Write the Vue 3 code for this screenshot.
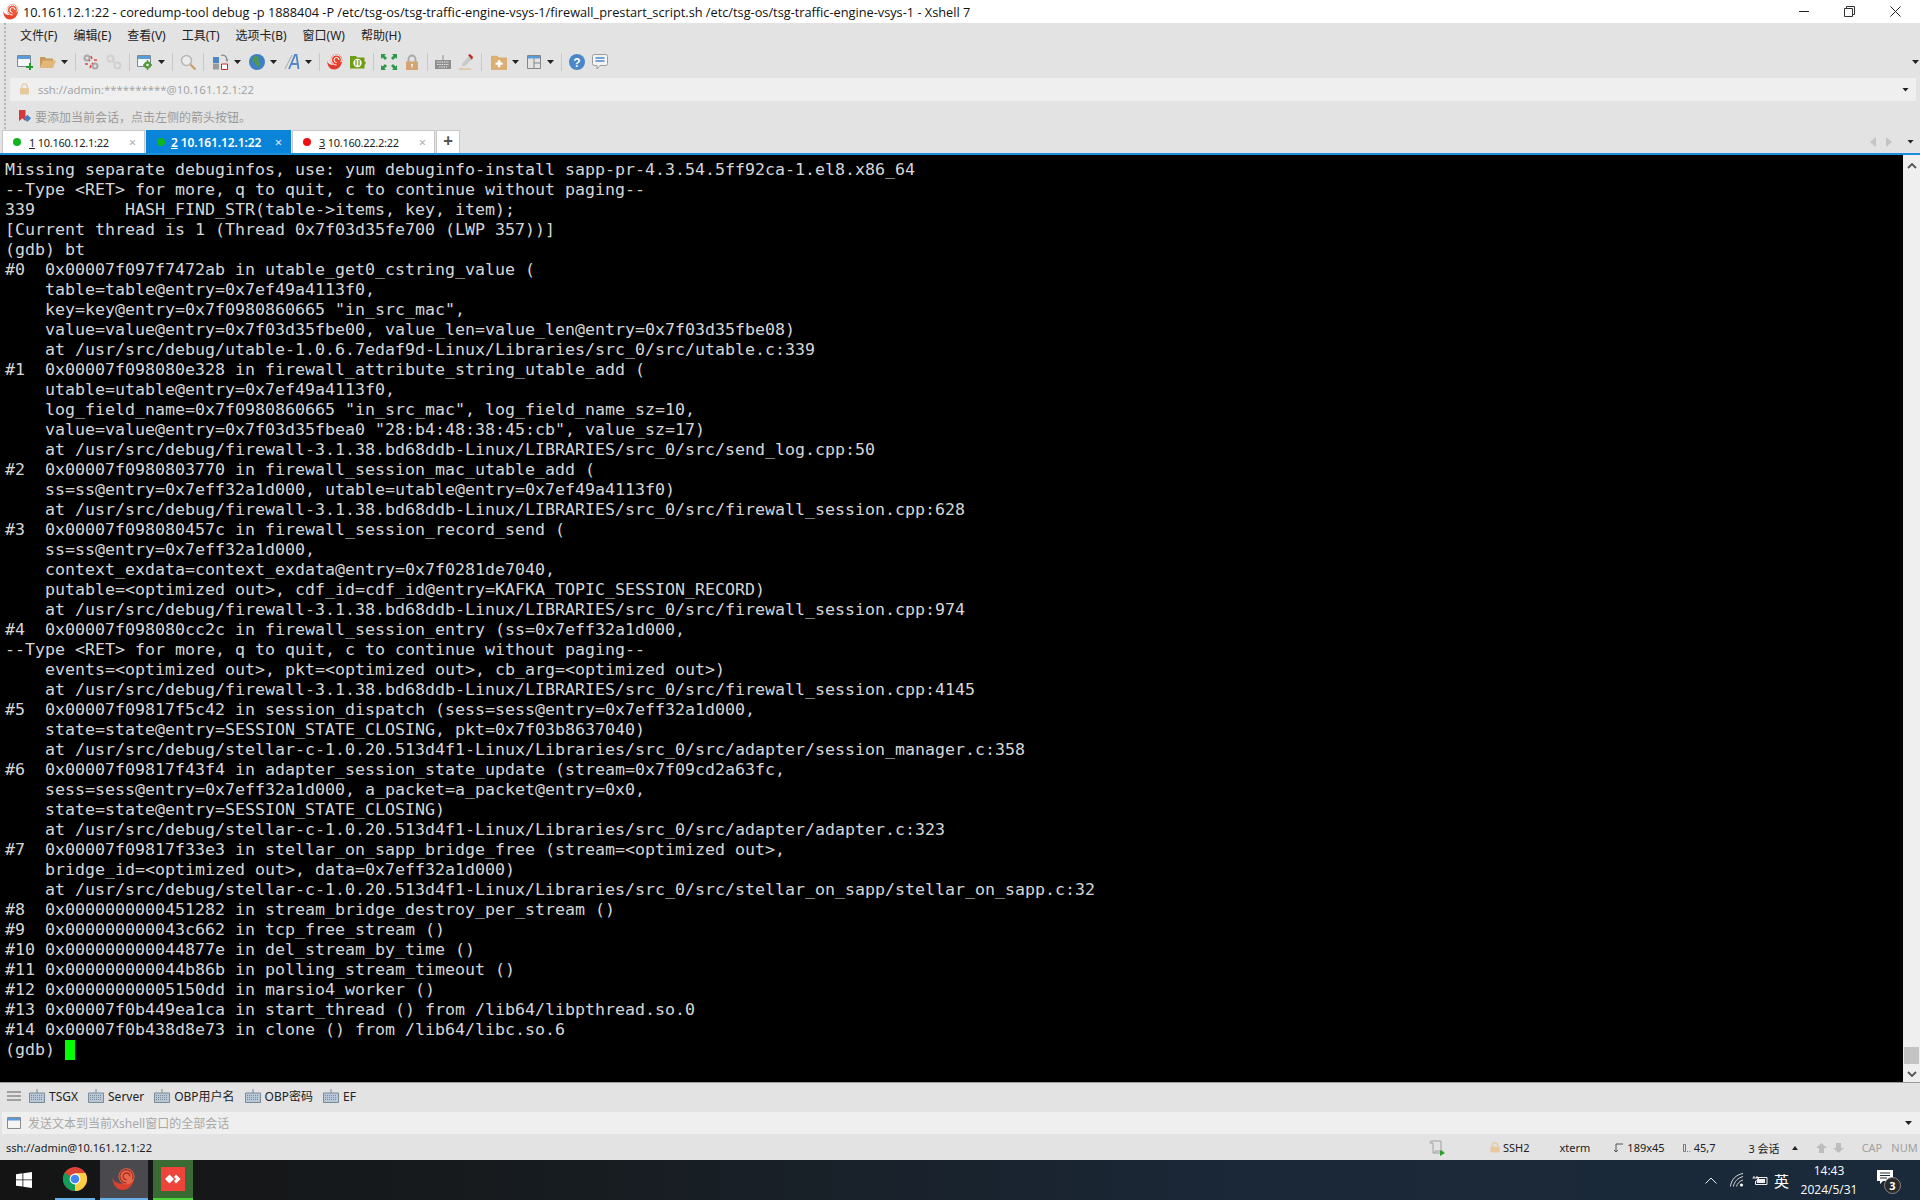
<script setup>
const lines = [
'Missing separate debuginfos, use: yum debuginfo-install sapp-pr-4.3.54.5ff92ca-1.el8.x86_64',
'--Type <RET> for more, q to quit, c to continue without paging--',
'339         HASH_FIND_STR(table->items, key, item);',
'[Current thread is 1 (Thread 0x7f03d35fe700 (LWP 357))]',
'(gdb) bt',
'#0  0x00007f097f7472ab in utable_get0_cstring_value (',
'    table=table@entry=0x7ef49a4113f0,',
'    key=key@entry=0x7f0980860665 "in_src_mac",',
'    value=value@entry=0x7f03d35fbe00, value_len=value_len@entry=0x7f03d35fbe08)',
'    at /usr/src/debug/utable-1.0.6.7edaf9d-Linux/Libraries/src_0/src/utable.c:339',
'#1  0x00007f098080e328 in firewall_attribute_string_utable_add (',
'    utable=utable@entry=0x7ef49a4113f0,',
'    log_field_name=0x7f0980860665 "in_src_mac", log_field_name_sz=10,',
'    value=value@entry=0x7f03d35fbea0 "28:b4:48:38:45:cb", value_sz=17)',
'    at /usr/src/debug/firewall-3.1.38.bd68ddb-Linux/LIBRARIES/src_0/src/send_log.cpp:50',
'#2  0x00007f0980803770 in firewall_session_mac_utable_add (',
'    ss=ss@entry=0x7eff32a1d000, utable=utable@entry=0x7ef49a4113f0)',
'    at /usr/src/debug/firewall-3.1.38.bd68ddb-Linux/LIBRARIES/src_0/src/firewall_session.cpp:628',
'#3  0x00007f098080457c in firewall_session_record_send (',
'    ss=ss@entry=0x7eff32a1d000,',
'    context_exdata=context_exdata@entry=0x7f0281de7040,',
'    putable=<optimized out>, cdf_id=cdf_id@entry=KAFKA_TOPIC_SESSION_RECORD)',
'    at /usr/src/debug/firewall-3.1.38.bd68ddb-Linux/LIBRARIES/src_0/src/firewall_session.cpp:974',
'#4  0x00007f098080cc2c in firewall_session_entry (ss=0x7eff32a1d000,',
'--Type <RET> for more, q to quit, c to continue without paging--',
'    events=<optimized out>, pkt=<optimized out>, cb_arg=<optimized out>)',
'    at /usr/src/debug/firewall-3.1.38.bd68ddb-Linux/LIBRARIES/src_0/src/firewall_session.cpp:4145',
'#5  0x00007f09817f5c42 in session_dispatch (sess=sess@entry=0x7eff32a1d000,',
'    state=state@entry=SESSION_STATE_CLOSING, pkt=0x7f03b8637040)',
'    at /usr/src/debug/stellar-c-1.0.20.513d4f1-Linux/Libraries/src_0/src/adapter/session_manager.c:358',
'#6  0x00007f09817f43f4 in adapter_session_state_update (stream=0x7f09cd2a63fc,',
'    sess=sess@entry=0x7eff32a1d000, a_packet=a_packet@entry=0x0,',
'    state=state@entry=SESSION_STATE_CLOSING)',
'    at /usr/src/debug/stellar-c-1.0.20.513d4f1-Linux/Libraries/src_0/src/adapter/adapter.c:323',
'#7  0x00007f09817f33e3 in stellar_on_sapp_bridge_free (stream=<optimized out>,',
'    bridge_id=<optimized out>, data=0x7eff32a1d000)',
'    at /usr/src/debug/stellar-c-1.0.20.513d4f1-Linux/Libraries/src_0/src/stellar_on_sapp/stellar_on_sapp.c:32',
'#8  0x0000000000451282 in stream_bridge_destroy_per_stream ()',
'#9  0x000000000043c662 in tcp_free_stream ()',
'#10 0x000000000044877e in del_stream_by_time ()',
'#11 0x000000000044b86b in polling_stream_timeout ()',
'#12 0x00000000005150dd in marsio4_worker ()',
'#13 0x00007f0b449ea1ca in start_thread () from /lib64/libpthread.so.0',
'#14 0x00007f0b438d8e73 in clone () from /lib64/libc.so.6',
]
const menus = ['文件(F)', '编辑(E)', '查看(V)', '工具(T)', '选项卡(B)', '窗口(W)', '帮助(H)']
const tabs = [
  { n: '1', host: '10.160.12.1:22', dot: '#0fb41e', active: false },
  { n: '2', host: '10.161.12.1:22', dot: '#0fb41e', active: true },
  { n: '3', host: '10.160.22.2:22', dot: '#f01010', active: false },
]
const quick = ['TSGX', 'Server', 'OBP用户名', 'OBP密码', 'EF']
</script>

<template>
  <div class="screen">
    <header class="title">
      <svg class="swirl16" viewBox="0 0 16 16">
        <path d="M0 7c1 3 4 4.500 7 4 2 0 3.500-.5 5-1.500l3-3c0 5-3.500 9-8 9C3 15.500.5 12 0 7z" fill="#e8432f"/>
        <circle cx="9.500" cy="6" r="5.800" fill="#ee5a3c"/>
        <path d="M9.500 8.500a2.500 2.500 0 112.500-2.500M9.500 11a5 5 0 114.500-3" fill="none" stroke="#fff" stroke-width="1"/>
      </svg>
      <span class="title-text">10.161.12.1:22 - coredump-tool debug -p 1888404 -P /etc/tsg-os/tsg-traffic-engine-vsys-1/firewall_prestart_script.sh /etc/tsg-os/tsg-traffic-engine-vsys-1 - Xshell 7</span>
      <div class="win-btns">
        <svg width="10" height="2" viewBox="0 0 10 2"><path d="M0 .5h10" stroke="#222"/></svg>
        <svg width="11" height="11" viewBox="0 0 11 11" fill="none" stroke="#333"><path d="M.5 2.500h8v8h-8zM2.500 2.500v-2h8v8h-2"/></svg>
        <svg width="11" height="11" viewBox="0 0 11 11" stroke="#222"><path d="M.5.5l10 10M10.500.5l-10 10"/></svg>
      </div>
    </header>

    <section class="chrome">
      <div class="grip"></div>
      <nav class="menu"><span v-for="m in menus" :key="m">{{ m }}</span></nav>

      <div class="toolbar">
        <svg class="ic" viewBox="0 0 16 16"><path d="M.5 1.500h13v11H.5z" fill="#f4f7fa" stroke="#7d8a96"/><path d="M1 2h12v3H1z" fill="#5a9bd8"/><path d="M9 12h3V9h2v3h2v2h-2v2h-2v-2H9z" fill="#1e9e2d"/></svg>
        <svg class="ic" viewBox="0 0 16 16"><path d="M0 3h5l1 1.500h7V7H3L0 14z" fill="#c89a5a"/><path d="M3 6.500h13L13 14H0z" fill="#e3b77a"/></svg>
        <i class="arrow"></i>
        <i class="sep"></i>
        <svg class="ic" viewBox="0 0 16 16" fill="none"><circle cx="4" cy="4" r="2.500" stroke="#a9a9a9" stroke-width="2"/><circle cx="12" cy="12" r="2.500" stroke="#a9a9a9" stroke-width="2"/><path d="M8 2l1 3M14 6l-3 0M2 10l3 0M7 14l1-3" stroke="#e04848" stroke-width="1.500"/><path d="M6 6l1 1M9 9l1 1" stroke="#c44" stroke-width="1.500"/></svg>
        <svg class="ic" viewBox="0 0 16 16" fill="none" stroke="#d2d2d2" stroke-width="2.200"><circle cx="4.500" cy="4.500" r="3"/><circle cx="11.500" cy="11.500" r="3"/><path d="M6.500 6.500l3 3"/></svg>
        <i class="sep"></i>
        <svg class="ic" viewBox="0 0 16 16"><path d="M.5 1.500h13v11H.5z" fill="#f4f7fa" stroke="#7d8a96"/><path d="M1 2h12v3H1z" fill="#5a9bd8"/><circle cx="10.500" cy="11" r="3.500" fill="#4d9b33"/><circle cx="10.500" cy="11" r="1.300" fill="#e8f2e4"/><path d="M10.500 6v2M10.500 14v2M6 11h1.500M13.500 11H15" stroke="#4d9b33" stroke-width="1.500"/></svg>
        <i class="arrow"></i>
        <i class="sep"></i>
        <svg class="ic" viewBox="0 0 16 16" fill="none"><circle cx="6.500" cy="6.500" r="5" stroke="#b7b7b7" stroke-width="1.600" fill="#ececec"/><path d="M10.500 10.500l5 5" stroke="#c99e66" stroke-width="2.200"/></svg>
        <i class="sep"></i>
        <svg class="ic ml2" viewBox="0 0 16 16"><path d="M0 3h6v6H0z" fill="#4d86c4"/><path d="M0 9.500h6v6H0z" fill="#9a9a9a"/><path d="M8.500 10h6v5.500h-6z" fill="#fff" stroke="#c62828"/><path d="M8 1.500c3-1 6 .8 6 4.500" fill="none" stroke="#8a8a8a" stroke-width="1.200"/><path d="M12.500 5.500h3L14 8z" fill="#8a8a8a"/></svg>
        <i class="arrow"></i>
        <svg class="ic ml1" viewBox="0 0 16 16"><circle cx="8" cy="8" r="8" fill="#3f7fc6"/><path d="M6 1.500l4 2-1 3 2 3-2 5-1.500-3.500L5 8 3 6.500z" fill="#4d9b4a"/></svg>
        <i class="arrow"></i>
        <svg class="ic" viewBox="0 0 16 16" fill="none"><path d="M1 15L8 1" stroke="#a9a9a9"/><path d="M5 15L11 1h1.500l2 14M7.500 10h6" stroke="#4f87c8" stroke-width="1.800"/></svg>
        <i class="arrow"></i>
        <i class="sep"></i>
        <svg class="ic" viewBox="0 0 16 16">
          <path d="M0 7c1 3 4 4.500 7 4 2 0 3.500-.5 5-1.500l3-3c0 5-3.500 9-8 9C3 15.500.5 12 0 7z" fill="#e23a30"/>
          <circle cx="9.500" cy="6" r="5.800" fill="#e8432f"/>
          <path d="M9.500 8.500a2.500 2.500 0 112.500-2.500M9.500 11a5 5 0 114.500-3" fill="none" stroke="#fff" stroke-width="1"/>
        </svg>
        <svg class="ic" viewBox="0 0 16 16"><path d="M0 2h6l1 1.500h7.500V7L16 9l-1.500 2v3.500H0z" fill="#6f9d14"/><circle cx="7.500" cy="9" r="4.200" fill="#fff"/><path d="M6 6v5.500M9 6v5.500" stroke="#6f9d14" stroke-width="1.300"/></svg>
        <i class="sep"></i>
        <svg class="ic" viewBox="0 0 16 16"><path d="M0 0h5L3.500 1.500 6 4 4 6 1.500 3.500 0 5zM16 0v5l-1.500-1.500L12 6l-2-2 2.500-2.500L11 0zM0 16v-5l1.500 1.500L4 10l2 2-2.500 2.500L5 16zM16 16h-5l1.500-1.500L10 12l2-2 2.500 2.500L16 11z" fill="#2d9a4a"/></svg>
        <svg class="ic" viewBox="0 0 16 16"><path d="M4.500 8V5a3.500 3.500 0 017 0v3" fill="none" stroke="#a9a9a9" stroke-width="1.800"/><path d="M2 7.500h12V16H2z" fill="#d4a574"/><circle cx="8" cy="11" r="1.200" fill="#f4e7d6"/><path d="M8 11v3" stroke="#f4e7d6"/></svg>
        <i class="sep"></i>
        <svg class="ic" viewBox="0 0 16 16"><path d="M0 6h16v9H0z" fill="#8e8e8e"/><path d="M8 6V1" stroke="#8e8e8e"/><path d="M2 8h12M2 10.500h12M4 13h8" stroke="#e8e8e8" stroke-dasharray="1.500 .8"/></svg>
        <svg class="ic" viewBox="0 0 16 16"><path d="M4 10l7-8 3 3-7 7H4z" fill="#c9c9c9"/><path d="M10 1l2-1 3 3-1 3z" fill="#c62828"/><path d="M1 15h12" stroke="#dcb98a" stroke-width="1.200"/></svg>
        <i class="sep"></i>
        <svg class="ic ml2" viewBox="0 0 14 14"><path d="M0 1.500h5.500L7 3h7v11H0z" fill="#dcae74"/><path d="M6 5.500h2.200v2H10.200v2H8.200v2H6v-2H4v-2h2z" fill="#fff"/></svg>
        <i class="arrow"></i>
        <svg class="ic" viewBox="0 0 16 16" fill="none"><path d="M1.500 1.500h13v13h-13z" stroke="#868686"/><path d="M2 2h12v2.500H2z" fill="#5a9bd8"/><path d="M8 4.500v10M8 9h6.500" stroke="#868686"/></svg>
        <i class="arrow"></i>
        <i class="sep"></i>
        <svg class="ic" viewBox="0 0 16 16"><circle cx="8" cy="8" r="8" fill="#4a86c8"/><text x="8" y="12.500" text-anchor="middle" font-size="12" font-weight="700" fill="#fff" font-family="Liberation Sans, sans-serif">?</text></svg>
        <svg class="ic" viewBox="0 0 16 16"><path d="M2.500.5h11a2 2 0 012 2v7a2 2 0 01-2 2H8l-3 3.500v-3.500H2.500a2 2 0 01-2-2v-7a2 2 0 012-2z" fill="#f4f4f4" stroke="#9a9a9a"/><path d="M3.500 4h9M3.500 7h9" stroke="#4a86c8" stroke-width="1.500"/></svg>
        <i class="arrow end"></i>
      </div>

      <div class="address">
        <svg class="addr-lock" viewBox="0 0 12 12"><path d="M3 5V3.500a3 3 0 016 0V5" fill="none" stroke="#e8c99f" stroke-width="1.400"/><rect x="1" y="5" width="10" height="7" rx="1" fill="#e8c99f"/></svg>
        <span class="addr-text">ssh://admin:**********@10.161.12.1:22</span>
        <i class="arrow end"></i>
      </div>

      <div class="tip">
        <svg class="bm" viewBox="0 0 14 14"><path d="M0 0h7v12L3.500 9 0 12z" fill="#d43a3a"/><path d="M9 5l4 4-4 4-3.500-4z" fill="#3f7fc6"/></svg>
        <span>要添加当前会话，点击左侧的箭头按钮。</span>
      </div>

      <div class="tabbar">
        <div v-for="t in tabs" :key="t.n" class="tab" :class="{ active: t.active }">
          <i class="dot" :style="{ background: t.dot }"></i>
          <span class="tab-label"><u>{{ t.n }}</u> {{ t.host }}</span>
          <span class="tab-x">×</span>
        </div>
        <div class="tab-plus">+</div>
        <div class="tab-nav">
          <svg width="7" height="10" viewBox="0 0 7 10"><path d="M6 0v10L0 5z" fill="#c4c4c4"/></svg>
          <svg width="7" height="10" viewBox="0 0 7 10"><path d="M1 0v10l6-5z" fill="#c4c4c4"/></svg>
          <i class="arrow end"></i>
        </div>
      </div>
    </section>

    <main class="term-wrap">
      <div class="term">
        <div v-for="(l, i) in lines" :key="i" class="line">{{ l }}</div>
        <div class="line">(gdb) <i class="cursor"></i></div>
      </div>
      <aside class="scroll">
        <svg width="10" height="7" viewBox="0 0 10 7"><path d="M1 6l4-4 4 4" fill="none" stroke="#555" stroke-width="1.800"/></svg>
        <div class="thumb"></div>
        <svg width="10" height="7" viewBox="0 0 10 7"><path d="M1 1l4 4 4-4" fill="none" stroke="#555" stroke-width="1.800"/></svg>
      </aside>
    </main>

    <section class="quick">
      <svg class="burger" viewBox="0 0 14 10"><path d="M0 1h14M0 5h14M0 9h14" stroke="#8a8a8a" stroke-width="1.500"/></svg>
      <div v-for="q in quick" :key="q" class="qitem">
        <svg class="qkb" viewBox="0 0 16 14"><path d="M.5 4h15v9.500H.5z" fill="#b8c8d8" stroke="#7c8a96"/><path d="M8 4V0" stroke="#7c8a96"/><path d="M2 6.500h12M2 8.500h12M2 10.500h12" stroke="#7c8a96" stroke-dasharray="1 1"/></svg>
        <span>{{ q }}</span>
      </div>
    </section>

    <section class="send">
      <svg class="send-ic" viewBox="0 0 14 12"><path d="M.5.500h13v11H.5z" fill="#f4f4f4" stroke="#8a8a8a"/><path d="M1 1h12v2.500H1z" fill="#5a9bd8"/></svg>
      <span>发送文本到当前Xshell窗口的全部会话</span>
      <i class="arrow end"></i>
    </section>

    <footer class="status">
      <span class="st-left">ssh://admin@10.161.12.1:22</span>
      <svg class="st-script" viewBox="0 0 16 16"><path d="M3 1h9v11M3 1c-1.500 0-2 1-2 2h3M4 3v10h8c1 0 2-1 2-2H6v2" fill="none" stroke="#a0a0a0"/><path d="M11 10l5 3-5 3z" fill="#2ca02c"/></svg>
      <svg class="st-lock" viewBox="0 0 11 11"><path d="M2.500 5V3.500a3 3 0 016 0V5" fill="none" stroke="#e8c99f" stroke-width="1.300"/><rect x=".5" y="4.500" width="10" height="6.500" rx="1" fill="#e8c99f"/></svg>
      <span class="st-ssh">SSH2</span>
      <span class="st-xterm">xterm</span>
      <svg class="st-size" viewBox="0 0 9 9"><path d="M2 1v8M0 7l2 2 2-2M2 1h7" fill="none" stroke="#555"/></svg>
      <span class="st-dim">189x45</span>
      <svg class="st-cur" viewBox="0 0 9 8"><path d="M.5.500h2v7h-2z" fill="none" stroke="#777"/><path d="M4 7h1v1H4zM6.500 7h1v1h-1z" fill="#777"/></svg>
      <span class="st-pos">45,7</span>
      <span class="st-sess">3 会话</span>
      <svg class="st-up" width="6" height="4" viewBox="0 0 6 4"><path d="M3 0l3 4H0z" fill="#222"/></svg>
      <svg class="st-ar1" width="11" height="10" viewBox="0 0 11 10"><path d="M5.500 0L11 5H8v5H3V5H0z" fill="#bdbdbd"/></svg>
      <svg class="st-ar2" width="11" height="10" viewBox="0 0 11 10"><path d="M5.500 10L11 5H8V0H3v5H0z" fill="#bdbdbd"/></svg>
      <span class="st-cap">CAP</span>
      <span class="st-num">NUM</span>
    </footer>

    <footer class="taskbar">
      <svg class="start" viewBox="0 0 16 16"><path d="M0 2.200L6.500 1.300v6.200H0zM7.300 1.200L16 0v7.500H7.300zM0 8.300h6.500v6.300L0 13.800zM7.300 8.300H16V16l-8.700-1.200z" fill="#fff"/></svg>
      <div class="task t-chrome">
        <svg width="24" height="24" viewBox="0 0 24 24">
          <circle cx="12" cy="12" r="12" fill="#db4437"/>
          <path d="M12 12L1.600 6A12 12 0 002 18.600 12 12 0 0012 24z" fill="#0f9d58"/>
          <path d="M12 12v12A12 12 0 0022.400 6H12z" fill="#ffcd40"/>
          <circle cx="12" cy="12" r="5.400" fill="#fff"/><circle cx="12" cy="12" r="4.300" fill="#4285f4"/>
        </svg>
      </div>
      <div class="task t-xshell">
        <svg width="24" height="22" viewBox="0 0 16 15">
          <path d="M0 6.500c1 3 4 4.500 7 4 2 0 3.500-.5 5-1.500l3-3c0 5-3.500 9-8 9C3 15 .5 11.500 0 6.500z" fill="#d9412f"/>
          <circle cx="9.700" cy="5.700" r="5.500" fill="#e8674d"/>
          <path d="M9.700 8a2.300 2.300 0 112.300-2.300M9.700 10.200a4.500 4.500 0 114-2.500" fill="none" stroke="#a83022" stroke-width=".9"/>
        </svg>
      </div>
      <div class="task t-any">
        <svg width="24" height="24" viewBox="0 0 24 24"><path d="M0 0h24v24H0z" fill="#ef443b"/><path d="M8.500 7.500L13 12l-4.500 4.500L4 12z" fill="#fff"/><path d="M15 7.500l4.500 4.500-4.500 4.500-2-2.500 2-2-2-2z" fill="#fff"/></svg>
      </div>
      <div class="tray">
        <svg width="12" height="7" viewBox="0 0 12 7"><path d="M.5 6.500L6 1l5.500 5.500" fill="none" stroke="#eee"/></svg>
        <svg class="tr-wifi" width="14" height="14" viewBox="0 0 14 14" fill="none" stroke="#d8d8d8"><path d="M.5 13.500C1 7 6 1.500 13 .5M3.500 13.500C4 9 7.500 5 13 3.500M6.500 13.500C7 11 9.500 8 13 7"/><circle cx="11.500" cy="12" r="1.600" fill="#fff" stroke="none"/></svg>
        <svg class="tr-bat" width="16" height="10" viewBox="0 0 16 10"><path d="M2 1v2M5 1v2M.5 3h6v1.500l-3 2" stroke="#eee" fill="none"/><path d="M4 2.500h11v7H3.500V6" fill="none" stroke="#eee"/><path d="M5 4h8v4H5z" fill="#eee"/></svg>
        <span class="tr-ime">英</span>
        <div class="clock"><span>14:43</span><span>2024/5/31</span></div>
        <div class="notif">
          <svg width="16" height="14" viewBox="0 0 16 14"><path d="M0 0h16v11H6l-3 3v-3H0z" fill="#fff"/><path d="M3 3h10M3 5.500h10M3 8h7" stroke="#1a2a3a"/></svg>
          <b class="badge">3</b>
        </div>
      </div>
    </footer>
  </div>
</template>

<style>
html, body { margin: 0; background: #000; }
</style>

<style scoped>
.screen {
  width: 1920px; height: 1200px; display: flex; flex-direction: column; overflow: hidden;
  font-family: "Noto Sans", "Noto Sans CJK SC", sans-serif; font-size: 12px; color: #333; background: #e3e3e3;
}
svg { display: block; flex: none; }
i { display: block; font-style: normal; }

.title { height: 23px; background: #fff; display: flex; align-items: center; padding-left: 3px; color: #111; }
.swirl16 { width: 16px; height: 16px; }
.title-text { margin-left: 4px; font-family: "Open Sans", "Noto Sans", sans-serif; font-size: 12.75px; white-space: nowrap; }
.win-btns { margin-left: auto; display: flex; align-items: center; gap: 35px; padding-right: 19px; }

.chrome { position: relative; height: 130px; background: #e3e3e3; display: flex; flex-direction: column; }
.grip { position: absolute; left: 4px; top: 0; height: 107px; width: 2px; background: repeating-linear-gradient(#b4b4b4 0 2px, transparent 2px 4px); }
.menu { height: 23px; display: flex; align-items: center; padding-left: 20px; gap: 16px; font-size: 12px; color: #222; }

.toolbar { height: 32px; padding-left: 17px; display: flex; align-items: center; gap: 7px; }
.ic { width: 16px; height: 16px; }
.ml1 { margin-left: 1px; }
.ml2 { margin-left: 2px; }
.arrow { width: 7px; height: 4px; margin-left: -2px; background: #222; clip-path: polygon(0 0, 100% 0, 50% 100%); flex: none; }
.arrow.end { margin-left: auto; }
.sep { width: 1px; height: 18px; background: #c8c8c8; flex: none; }
.toolbar .arrow.end { margin-right: 1px; }

.address { margin: 0 4px 0 10px; height: 23px; background: #efefef; display: flex; align-items: center; padding: 0 7px 0 9px; color: #a0a0a0; }
.addr-lock { width: 11px; height: 12px; margin-top: -2px; }
.addr-text { margin-left: 8px; font-family: "Open Sans", sans-serif; font-size: 11.4px; }

.tip { height: 29px; padding-top: 2px; box-sizing: border-box; display: flex; align-items: center; padding-left: 19px; color: #9a9a9a; font-size: 12px; }
.bm { width: 13px; height: 13px; }
.tip span { margin-left: 3px; }

.tabbar { height: 23px; display: flex; padding-left: 2px; gap: 1px; }
.tab { width: 143px; box-sizing: border-box; background: #fff; display: flex; align-items: center; padding-left: 10px; border: 1px solid #c8c8c8; border-bottom: 0; color: #222; font-size: 11px; letter-spacing: -.25px; }
.tab.active { width: 145px; background: #0a84d8; border-color: #0a84d8; color: #fff; font-weight: 600; font-size: 12px; letter-spacing: -.1px; }
.dot { width: 8px; height: 8px; border-radius: 50%; }
.tab-label { margin-left: 8px; white-space: nowrap; }
.active .tab-label { margin-left: 6px; }
.tab-x { margin-left: auto; margin-right: 8px; color: #b0b0b0; font-size: 13px; }
.active .tab-x { color: #d8ecfa; font-weight: 400; }
.tab-plus { width: 24px; box-sizing: border-box; background: #fff; border: 1px solid #c8c8c8; border-bottom: 0; text-align: center; font-size: 17px; font-weight: 700; line-height: 20px; color: #555; margin-left: 0; }
.tab-nav { margin-left: auto; display: flex; align-items: center; width: 50px; gap: 8px; padding-right: 6px; box-sizing: border-box; }

.term-wrap { height: 930px; box-sizing: border-box; border-top: 2px solid #1b8fdc; border-bottom: 1px solid #9c9c9c; display: flex; background: #000; }
.term { flex: 1; padding: 5px 0 0 5px; font-family: "DejaVu Sans Mono", monospace; font-size: 16.61px; line-height: 20px; color: #d6d6d6; white-space: pre; overflow: hidden; }
.line { height: 20px; }
.cursor { display: inline-block; width: 10px; height: 20px; background: #00ff00; vertical-align: top; }
.scroll { width: 17px; background: #efefef; display: flex; flex-direction: column; align-items: center; padding-top: 7px; box-sizing: border-box; }
.thumb { width: 15px; height: 17px; background: #c4c4c4; margin-top: auto; margin-bottom: 7px; }
.scroll svg:last-child { margin-bottom: 4px; }

.quick { height: 29px; box-sizing: border-box; padding-bottom: 3px; display: flex; align-items: center; padding-left: 7px; background: #e3e3e3; }
.burger { width: 14px; height: 10px; margin-right: 8px; }
.qitem { display: flex; align-items: center; gap: 4px; margin-right: 10px; font-size: 12px; color: #222; }
.qkb { width: 16px; height: 14px; }

.send { margin-left: 2px; height: 22px; background: #efefef; display: flex; align-items: center; padding: 0 8px 0 5px; color: #a8a8a8; font-size: 12px; }
.send-ic { width: 14px; height: 12px; }
.send span { margin-left: 7px; }

.status { height: 26px; box-sizing: border-box; padding-top: 1px; display: flex; align-items: center; padding-left: 6px; font-size: 11px; color: #222; }
.st-left { width: 1423px; }
.st-script { width: 16px; height: 16px; }
.st-lock { width: 10px; height: 11px; margin-left: 45px; }
.st-ssh { margin-left: 3px; }
.st-xterm { margin-left: 30px; }
.st-size { width: 9px; height: 9px; margin-left: 24px; }
.st-dim { margin-left: 4px; }
.st-cur { width: 9px; height: 8px; margin-left: 18px; }
.st-pos { margin-left: 2px; }
.st-sess { margin-left: 33px; }
.st-up { margin-left: 12px; }
.st-ar1 { margin-left: 18px; }
.st-ar2 { margin-left: 6px; }
.st-cap { margin-left: 18px; color: #a0a0a0; }
.st-num { margin-left: 9px; color: #a0a0a0; white-space: nowrap; }

.taskbar { height: 40px; display: flex; align-items: center; background: linear-gradient(90deg, #141414 0, #171c20 30%, #1b2838 65%, #1a2a3a 100%); color: #fff; }
.start { width: 16px; height: 16px; margin-left: 16px; }
.task { height: 40px; display: flex; align-items: center; justify-content: center; box-sizing: border-box; border-bottom: 2px solid transparent; }
.t-chrome { width: 40px; margin-left: 23px; border-bottom-color: #6ab0e8; }
.t-xshell { width: 48px; margin-left: 5px; background: #4a4a4e; border-bottom-color: #6ab0e8; }
.t-any { width: 40px; margin-left: 5px; background: #3a6b35; border-bottom-color: #4ed23c; }
.tray { margin-left: auto; display: flex; align-items: center; color: #fff; padding-right: 25px; }
.tr-wifi { margin-left: 13px; }
.tr-bat { margin-left: 8px; }
.tr-ime { margin-left: 6px; font-size: 15px; }
.clock { margin-left: 10px; width: 60px; display: flex; flex-direction: column; align-items: center; font-size: 12px; line-height: 19px; font-family: "Open Sans", sans-serif; }
.notif { margin-left: 18px; position: relative; width: 18px; height: 20px; }
.badge { position: absolute; left: 7px; top: 7px; width: 15px; height: 15px; border-radius: 50%; background: #2a2a2a; border: 1px solid #888; font-size: 11px; line-height: 15px; text-align: center; color: #fff; }
</style>
